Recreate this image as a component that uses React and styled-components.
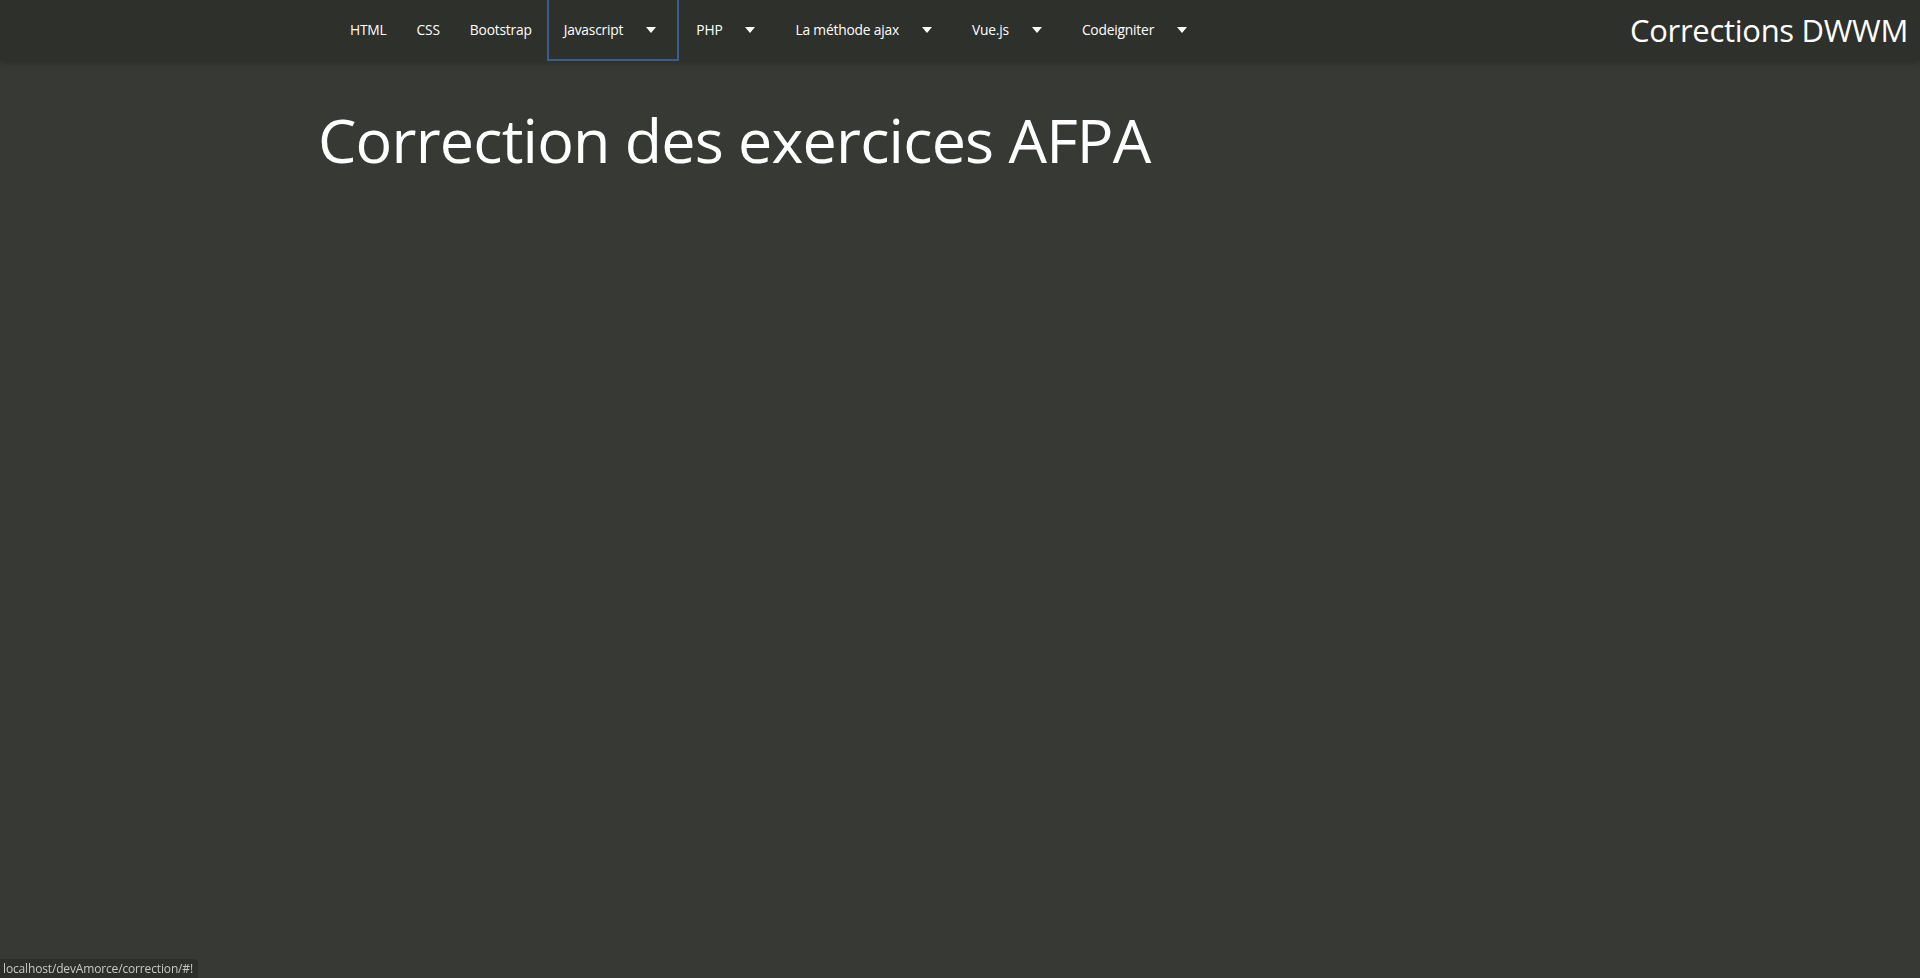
import React from 'react';
import styled, { createGlobalStyle } from 'styled-components';

const GlobalStyle = createGlobalStyle`
  html, body {
    margin: 0;
    padding: 0;
    height: 100%;
    background: #373a34;
    font-family: "Open Sans", "Noto Sans", sans-serif;
    color: #fff;
    overflow: hidden;
  }
  #root {
    min-height: 100%;
  }
`;

const Navbar = styled.nav`
  height: 61px;
  display: flex;
  align-items: stretch;
  background: #2e302b;
  box-shadow: 0 2px 6px rgba(0, 0, 0, 0.25);
  padding: 0 12px 0 335px;
  box-sizing: border-box;
`;

const Menu = styled.ul`
  display: flex;
  align-items: stretch;
  list-style: none;
  margin: 0;
  padding: 0;
`;

const MenuItem = styled.li`
  display: flex;
  align-items: center;
  padding: ${({ $dropdown }) => ($dropdown ? '0 21px 0 15px' : '0 13px')};
  font-size: 13.8px;
  letter-spacing: -0.2px;
  color: #fff;
  box-sizing: border-box;
  border: 2px solid ${({ $active }) => ($active ? '#3b5c8f' : 'transparent')};
  border-top: none;
  cursor: pointer;
`;

const Caret = styled.span`
  display: inline-block;
  width: 0;
  height: 0;
  margin-left: 23px;
  border-left: 5px solid transparent;
  border-right: 5px solid transparent;
  border-top: 6px solid #fff;
`;

const Brand = styled.a`
  margin-left: auto;
  align-self: center;
  font-size: 31px;
  color: #fff;
  text-decoration: none;
  letter-spacing: -0.3px;
  margin-top: -2px;
`;

const Container = styled.main`
  box-sizing: border-box;
  max-width: 1320px;
  margin: 0 auto;
  padding: 0 12px 0 18px;
`;

const Title = styled.h1`
  margin: 42px 0 0;
  font-size: 61px;
  font-weight: 400;
  line-height: 1.2;
  letter-spacing: -0.8px;
`;

const StatusBar = styled.div`
  position: fixed;
  left: 0;
  bottom: 0;
  padding: 1px 5px 1px 3px;
  background: #2d2f2b;
  color: #c8c8c8;
  font-size: 12px;
  border-top-right-radius: 4px;
  letter-spacing: -0.15px;
`;

const links = [
  { label: 'HTML' },
  { label: 'CSS' },
  { label: 'Bootstrap' },
  { label: 'Javascript', dropdown: true, active: true },
  { label: 'PHP', dropdown: true },
  { label: 'La méthode ajax', dropdown: true },
  { label: 'Vue.js', dropdown: true },
  { label: 'Codeigniter', dropdown: true },
];

const App = () => {
  return (
    <>
      <GlobalStyle />
      <Navbar>
        <Menu>
          {links.map((link) => (
            <MenuItem key={link.label} $dropdown={link.dropdown} $active={link.active}>
              {link.label}
              {link.dropdown && <Caret />}
            </MenuItem>
          ))}
        </Menu>
        <Brand href="#">Corrections DWWM</Brand>
      </Navbar>
      <Container>
        <Title>Correction des exercices AFPA</Title>
      </Container>
      <StatusBar>localhost/devAmorce/correction/#!</StatusBar>
    </>
  );
};

export default App;
